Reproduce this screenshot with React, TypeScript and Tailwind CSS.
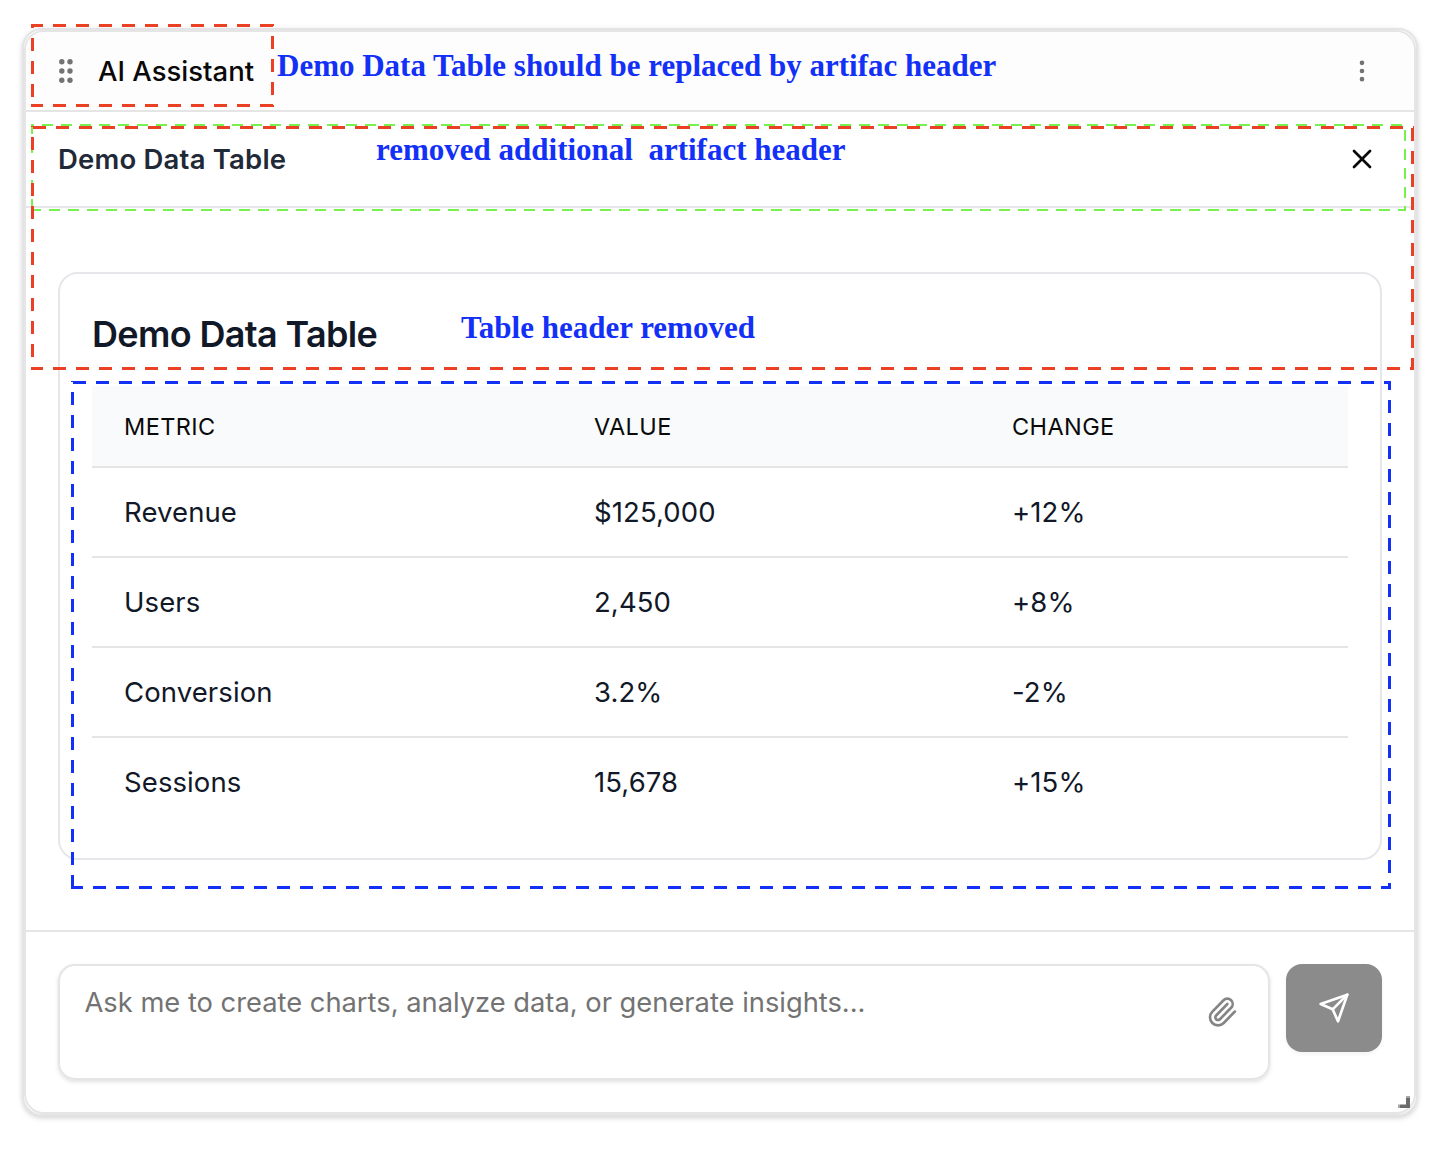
import { MoreVertical, Paperclip, X } from "lucide-react";

type Line = { at: number; from: number; to: number; phase: number };
type Frame = { color: string; size: number; dash: string; h: Line[]; v: Line[] };

/* Dashed review frames laid over the widget. `phase` is a coordinate at which a dash begins. */
const frames: Frame[] = [
  {
    color: "#78f14f", size: 2, dash: "11 8",
    h: [{ at: 125, from: 31, to: 1406, phase: 42 }, { at: 210, from: 31, to: 1406, phase: 49 }],
    v: [{ at: 32, from: 124, to: 211, phase: 142 }, { at: 1405, from: 124, to: 211, phase: 130 }],
  },
  {
    color: "#ea4024", size: 3, dash: "13 10",
    h: [{ at: 25.5, from: 31, to: 274, phase: 53 }, { at: 105.5, from: 31, to: 274, phase: 53 }],
    v: [{ at: 32.5, from: 24, to: 107, phase: 38 }, { at: 272.5, from: 24, to: 107, phase: 36 }],
  },
  {
    color: "#ea4024", size: 3, dash: "13 10",
    h: [{ at: 127.5, from: 31, to: 1414, phase: 33 }, { at: 368.5, from: 31, to: 1414, phase: 53 }],
    v: [{ at: 32.5, from: 126, to: 370, phase: 137 }, { at: 1412.5, from: 126, to: 370, phase: 128 }],
  },
  {
    color: "#1330f6", size: 3, dash: "13 10",
    h: [{ at: 382.5, from: 71, to: 1391, phase: 73 }, { at: 887.5, from: 71, to: 1391, phase: 93 }],
    v: [{ at: 72.5, from: 381, to: 889, phase: 392 }, { at: 1389.5, from: 381, to: 889, phase: 400 }],
  },
];

function ReviewFrames() {
  return (
    <svg className="pointer-events-none absolute inset-0" width="1438" height="1150" fill="none">
      {frames.map((f, i) => (
        <g key={i} stroke={f.color} strokeWidth={f.size} strokeDasharray={f.dash}>
          {f.h.map((l, j) => (
            <path key={`h${j}`} d={`M${l.from} ${l.at}H${l.to}`} strokeDashoffset={l.from - l.phase} />
          ))}
          {f.v.map((l, j) => (
            <path key={`v${j}`} d={`M${l.at} ${l.from}V${l.to}`} strokeDashoffset={l.from - l.phase} />
          ))}
        </g>
      ))}
    </svg>
  );
}

const rows = [
  ["Revenue", "$125,000", "+12%"],
  ["Users", "2,450", "+8%"],
  ["Conversion", "3.2%", "-2%"],
  ["Sessions", "15,678", "+15%"],
];

function GripDots() {
  return (
    <svg width="16" height="26" viewBox="0 0 16 26" fill="#737373">
      {[3.7, 13, 22.3].map((y) => (
        <g key={y}>
          <circle cx="3.8" cy={y} r="2.7" />
          <circle cx="12" cy={y} r="2.7" />
        </g>
      ))}
    </svg>
  );
}

function DataTable() {
  return (
    <div className="h-[588px] rounded-[20px] border-2 border-[#e5e7eb] px-8 pt-8">
      <h2 className="flex h-20 items-start pt-1 text-[36px] leading-[48px] font-semibold tracking-[-0.65px] text-[#111827]">
        Demo Data Table
      </h2>
      <div className="grid h-[82px] grid-cols-[470px_418px_368px] items-center border-b-2 border-[#e5e5e5] bg-[#f9fafb] pt-[2px] text-[23.5px] font-[420] tracking-[0.4px] text-[#0a0a0a]">
        <div className="pl-8">METRIC</div>
        <div className="pl-8">VALUE</div>
        <div className="pl-8">CHANGE</div>
      </div>
      {rows.map((row) => (
        <div
          key={row[0]}
          className="grid h-[90px] grid-cols-[470px_418px_368px] items-center border-b-2 border-[#e5e5e5] pt-px text-[27.5px] font-[440] tracking-[0.1px] text-[#111827] last:border-transparent"
        >
          {row.map((cell) => (
            <div key={cell} className="pl-8">{cell}</div>
          ))}
        </div>
      ))}
    </div>
  );
}

export default function App() {
  return (
    <div className="relative h-[1150px] w-[1438px] overflow-hidden bg-white px-[22px] pt-7 font-['Inter',sans-serif] whitespace-nowrap">
      <div className="h-[1088px] w-[1396px] rounded-[20px] border-2 border-[#e4e4e7] bg-white shadow-[0_2px_6px_rgba(0,0,0,0.1),0_2px_4px_rgba(0,0,0,0.08)]">
        <div className="flex h-full flex-col overflow-hidden rounded-[20px] border-2 border-[#e5e5e5] bg-white">
          <header className="flex h-20 shrink-0 items-center justify-between border-b-2 border-[#e5e5e5] bg-[#fdfdfd] px-8">
            <div className="flex items-center gap-6">
              <GripDots />
              <span className="pt-px text-[27.5px] font-medium text-[#0a0a0a]">AI Assistant</span>
            </div>
            <MoreVertical className="mr-[6px] size-7 text-[#737373]" />
          </header>
          <div className="flex h-24 shrink-0 items-center justify-between border-b-2 border-[#e5e7eb] px-8">
            <span className="pt-px text-[27.5px] font-[560] tracking-[0.2px] text-[#1f2937]">Demo Data Table</span>
            <X className="mr-1 size-8 text-[#0a0a0a]" />
          </div>
          <main className="h-[722px] shrink-0 px-8 pt-16">
            <DataTable />
          </main>
          <footer className="flex grow items-start gap-4 border-t-2 border-[#e5e5e5] px-8 pt-8">
            <div className="flex h-[116px] w-[1212px] items-start justify-between rounded-[17px] border-2 border-[#e5e5e5] pt-4 pr-[30.5px] pl-[24.5px] shadow-[0_2px_4px_rgba(0,0,0,0.12)]">
              <span className="text-[27.3px] leading-[41px] text-[#737373]">
                Ask me to create charts, analyze data, or generate insights...
              </span>
              <Paperclip className="mt-[14px] size-8 text-[#858585]" />
            </div>
            <button className="flex h-[88px] w-24 items-center justify-center rounded-2xl bg-[#8b8b8b] text-white shadow-[0_2px_4px_rgba(0,0,0,0.05)]">
              <svg width="32" height="32" viewBox="0 0 24 24" fill="none" stroke="currentColor" strokeWidth="2" strokeLinecap="round" strokeLinejoin="round">
                <path d="m22 2-7 20-4-9-9-4Z" />
                <path d="M22 2 11 13" />
              </svg>
            </button>
          </footer>
        </div>
      </div>
      <svg className="absolute top-[1096px] left-[1398px]" width="12" height="12">
        <path d="M8 2h4v10H2V8.500h6z" fill="#6b6b6b" />
        <path d="M8 0h4v2h-4zM0 8.500h2V12H0z" fill="#a8a8a8" />
      </svg>
      <ReviewFrames />
      <div className="absolute top-[46px] left-[277px] font-['Liberation_Serif',serif] text-[31px] leading-[39px] font-bold text-[#1330f6]">
        Demo Data Table should be replaced by artifac header
      </div>
      <div className="absolute top-[130px] left-[376px] font-['Liberation_Serif',serif] text-[31px] leading-[39px] font-bold whitespace-pre text-[#1330f6]">
        {"removed additional  artifact header"}
      </div>
      <div className="absolute top-[308px] left-[461px] font-['Liberation_Serif',serif] text-[31px] leading-[39px] font-bold text-[#1330f6]">
        Table header removed
      </div>
    </div>
  );
}
